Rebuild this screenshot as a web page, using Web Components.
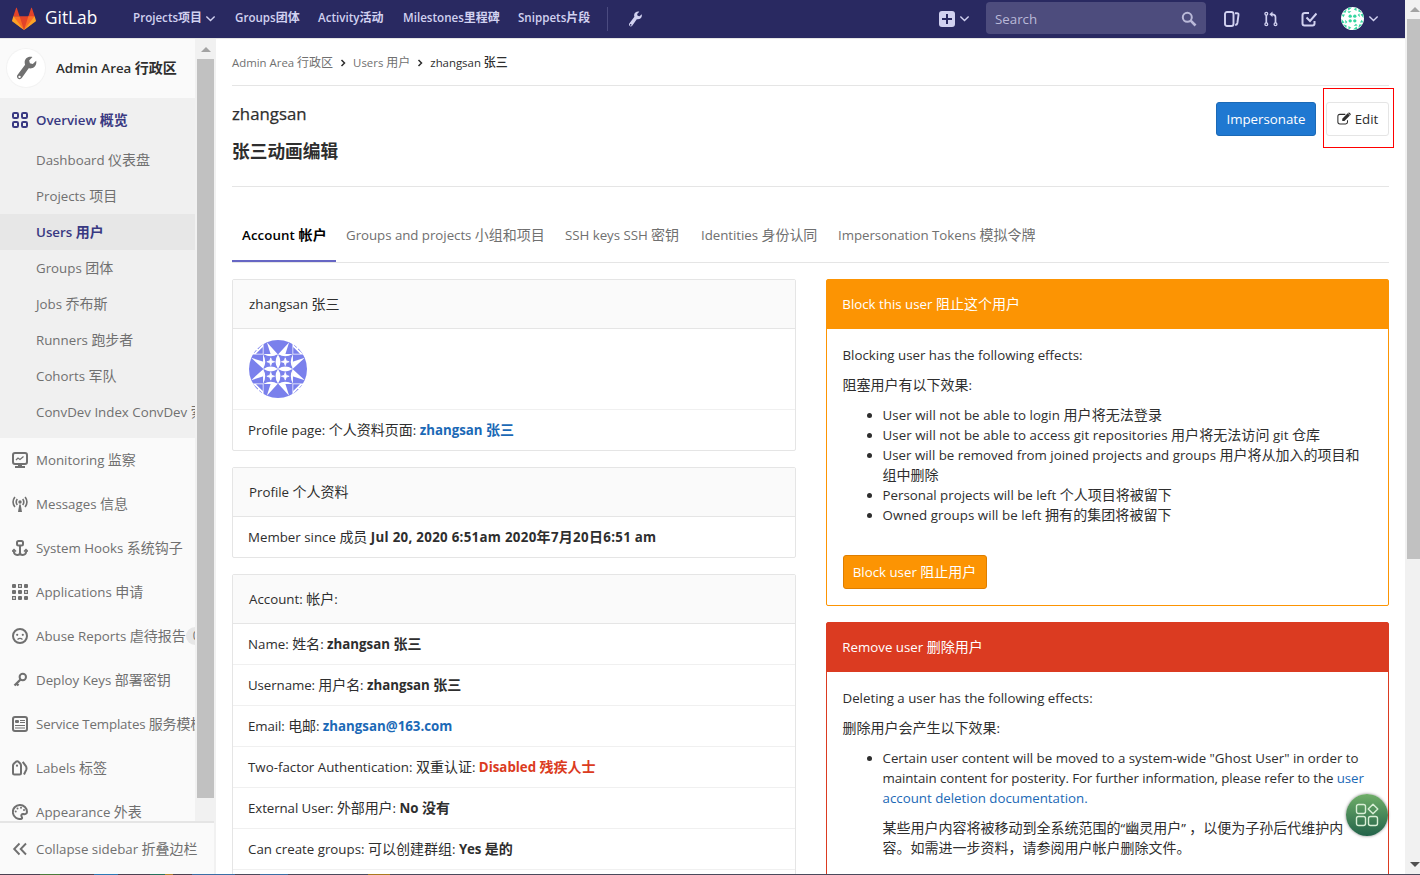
<!DOCTYPE html>
<html lang="zh">
<head>
<meta charset="utf-8">
<title>zhangsan · Users · GitLab</title>
<style>
    html, body {
        margin: 0;
        height: 100%;
        overflow: hidden;
    }
    body {
        font: 13.3px/20px "Open Sans", "Noto Sans CJK SC", sans-serif;
        color: #2e2e2e;
        background: #fff;
    }
</style>
</head>
<body>
<admin-page></admin-page>

<script>
// Latin runs inherit the text size, Chinese runs are set on a slightly bigger body
const wrapHan = html => html.replace(/>([^<]+)</g, (match, text) =>
    '>' + text.replace(/[\u4e00-\u9fff\uff0c\u3002]+/g, run => `<span class="zh">${run}</span>`) + '<');

class GlElement extends HTMLElement {
    constructor() {
        super();
        this.attachShadow({ mode: 'open' });
    }

    connectedCallback() {
        this.shadowRoot.innerHTML = `
            <style>
                * { box-sizing: border-box; }
                :host { display: block; box-sizing: border-box; }
                .zh { font-size: 1.053em; line-height: 1; }
                a { color: #1b69b6; text-decoration: none; }
                p, ul { margin: 0; padding: 0; }
            </style>
            ${wrapHan(this.render())}
        `;
    }
}

const ICONS = {
    overview: '<g fill="none" stroke="currentColor" stroke-width="2"><rect x="1" y="1" width="5" height="5" rx="1.2"/><rect x="10" y="1" width="5" height="5" rx="1.2"/><rect x="1" y="10" width="5" height="5" rx="1.2"/><rect x="10" y="10" width="5" height="5" rx="1.2"/></g>',
    monitor: '<g fill="none" stroke="currentColor"><rect x="1" y="1" width="14" height="11" rx="2" stroke-width="2"/><path d="M4 8l2-2 2 1.5L11.500 4.500" stroke-width="1.300"/><path d="M3 15h10" stroke-width="2"/><path d="M8 12v3" stroke-width="4"/></g>',
    messages: '<g fill="none" stroke="currentColor" stroke-width="1.600"><path d="M2.900 1Q-.8 6 2.900 11M13.100 1q3.700 5 0 10M5.300 3q-2.200 3 0 6M10.700 3q2.200 3 0 6"/></g><circle cx="8" cy="6" r="1.700" fill="currentColor"/><path d="M7.300 8.500h1.400L10 16H6z" fill="currentColor"/>',
    hook: '<g fill="none" stroke="currentColor" stroke-width="2"><rect x="5" y="1" width="6" height="4.500" rx="1.500"/><path d="M8 6v9M1.800 10.500v1q.4 3.500 3.400 3.500 2.800 0 2.800-2.500 0 2.500 2.800 2.500 3 0 3.400-3.500v-1"/><path d="M0 11.500l2-2 2 2M12 11.500l2-2 2 2" stroke-width="1.500"/></g>',
    applications: '<g fill="currentColor"><rect width="4" height="4" rx="1"/><rect x="12" width="4" height="4" rx="1"/><rect y="6" width="4" height="4" rx="1"/><rect x="6" y="6" width="4" height="4" rx="1"/><rect x="6" y="12" width="4" height="4" rx="1"/><rect x="12" y="12" width="4" height="4" rx="1"/></g><g fill="none" stroke="currentColor" stroke-width="1.200"><rect x="6.600" y=".6" width="2.800" height="2.800"/><rect x="12.600" y="6.600" width="2.800" height="2.800"/><rect x=".6" y="12.600" width="2.800" height="2.800"/></g>',
    abuse: '<circle cx="8" cy="8" r="7" fill="none" stroke="currentColor" stroke-width="2"/><circle cx="5.200" cy="6.800" r="1.100" fill="currentColor"/><circle cx="10.800" cy="6.800" r="1.100" fill="currentColor"/><path d="M5.500 11.500q2.500-2.300 5 0" fill="none" stroke="currentColor" stroke-width="1.300"/>',
    key: '<g fill="none" stroke="currentColor" stroke-width="2"><circle cx="10.800" cy="5" r="3.200"/><path d="M8.500 7.500L2.500 13.500M4 11l2.500 2.500" stroke-width="2.300"/></g>',
    template: '<rect x="1" y="1" width="14" height="14" rx="2" fill="none" stroke="currentColor" stroke-width="2"/><rect x="3" y="4" width="4" height="3" rx="1" fill="currentColor"/><path d="M8 4.500h5M8 6.500h5M3 9.500h10M3 12h10" stroke="currentColor"/>',
    labels: '<g fill="none" stroke="currentColor" stroke-width="2"><path d="M1 5.500Q1 4.500 2 3.500l2-1.800q1.200-.8 2.400 0L8.200 3.500q.8.900.8 2V13q0 1.500-1.500 1.500h-5Q1 14.500 1 13zM10.700 1.800l3 4q1.300 2 .5 4L12 14.500"/></g><circle cx="5" cy="5.700" r="1.100" fill="currentColor"/>',
    appearance: '<path d="M8 1a7 7 0 1 0 1.500 13.800c.9-.4.7-1.300.2-2-.9-1.600 0-3 1.600-2.800 1.400.4 3.700.1 3.700-2A7 7 0 0 0 8 1z" fill="none" stroke="currentColor" stroke-width="2"/><g fill="currentColor"><circle cx="3.700" cy="7.500" r="1"/><circle cx="5.500" cy="4.600" r="1"/><circle cx="9" cy="3.800" r="1"/><circle cx="12" cy="6" r="1"/></g>',
    collapse: '<path d="M7.500 2.500L2.200 8l5.300 5.500M14 2.500L8.700 8l5.300 5.500" fill="none" stroke="currentColor" stroke-width="1.900"/>',
    wrench: '<path d="M14.800 3.200l-2.300 2.100-1.900-.5-.5-1.800L12.300.7C10 .1 7.300 1.300 7.100 4c0 .8.100 1.300.3 1.800L2.300 12.600c-1.300 1.900 1.500 4 2.900 2.100l4.600-6.500c3.200.6 5.600-1.800 5-5zM3.700 14.700a.8.800 0 1 1 0-1.600.8.800 0 0 1 0 1.600z" fill="currentColor"/>',
    chevron: '<path d="M2 5l6 6 6-6" fill="none" stroke="currentColor" stroke-width="2"/>',
    crumb: '<path d="M5 2l6 6-6 6" fill="none" stroke="currentColor" stroke-width="3"/>',
    plus: '<rect width="16" height="16" rx="3" fill="currentColor"/><path d="M8 3v10M3 8h10" stroke="#292961" stroke-width="2"/>',
    search: '<circle cx="6.300" cy="6.300" r="4.500" fill="none" stroke="currentColor" stroke-width="2"/><path d="M9.700 9.700l4.800 4.800" stroke="currentColor" stroke-width="2.600"/>',
    issues: '<g fill="none" stroke="currentColor" stroke-width="1.900"><rect x="1" y="1" width="8.500" height="14" rx="2"/><path d="M11 2.200h2q1.700 0 1.500 1.700L13.400 12q-.3 1.800-2.200 2"/></g>',
    merge: '<g fill="none" stroke="currentColor" stroke-width="1.300"><circle cx="3.300" cy="2.700" r="1.400"/><circle cx="3.300" cy="13.300" r="1.400"/><circle cx="12.500" cy="13.300" r="1.400"/></g><path d="M3.300 4v8M12.500 12V6q0-2.700-3.500-2.700" fill="none" stroke="currentColor" stroke-width="1.700"/><path d="M9.500.5v5.600L6.300 3.300z" fill="currentColor"/>',
    todo: '<g fill="none" stroke="currentColor" stroke-width="2"><path d="M8 2H4Q1.500 2 1.500 4v8.500q0 2 2 2h8q2 0 2-2V10"/><path d="M5.500 6.500L9 10l6.500-7.500"/></g>',
    edit: '<g fill="none" stroke="currentColor" stroke-width="1.200"><path d="M9.500 2.700H3.300Q1 2.700 1 5v6.500q0 2.200 2.300 2.200h6.500q2.200 0 2.200-2.200V9.500"/></g><path d="M12.200 1.500l2.500 2.500-6.200 6.200H6V7.700zM13 .8q.7-.6 1.400 0l1.100 1.100q.6.700 0 1.300l-.4.400L12.600 1.200z" fill="currentColor"/>'
};

customElements.define('gl-icon', class extends GlElement {
    render() {
        const size = this.getAttribute('size') || 16;
        return `
            <style>
                :host { flex: none; width: ${size}px; height: ${size}px; }
                svg { display: block; }
            </style>
            <svg width="${size}" height="${size}" viewBox="0 0 16 16">${ICONS[this.getAttribute('name')]}</svg>
        `;
    }
});

customElements.define('gl-identicon', class extends GlElement {
    // a quarter of the picture, turned around the centre of a 4x4 grid
    quarter() {
        if (this.hasAttribute('green')) {
            return `
                <path d="M3 9l7-5-2 6zM11 1l8 0-6 5zM11 8l7-1-4 4zM1 13l6 0-3 5z" fill="#35d6a0"/>
                <circle cx="16" cy="16" r="2.900" fill="#35d6a0"/>
            `;
        }
        return `
            <path d="M10 0h10v10H10zM0 10h10v10H0z" fill="#7a80ec"/>
            <path d="M12.300 1.500L20 10h-5zM1.500 12.300L10 20v-5z" fill="#fff"/>
            <path d="M9.500 9.500V4.800L4.800 9.500zM1 9l3-3 1.300 1.300L3.600 9zM5 5l3-3h1.500v1L6.300 6.300z" fill="#7a80ec"/>
            <path d="M10 10h10v10H10z" fill="#7a80ec"/>
            <path d="M10 9.700q5 3 10 0M9.700 10q3 5 0 10M10 20q5-3.400 10 0zM20 10q-3.400 5 0 10z" fill="#fff"/>
            <path d="M15 12.300l.7 2 2 .7-2 .7-.7 2-.7-2-2-.7 2-.7z" fill="#fff" stroke="#fff" stroke-width=".5"/>
        `;
    }

    render() {
        const size = this.getAttribute('size');
        return `
            <style>
                :host { flex: none; width: ${size}px; height: ${size}px; border-radius: 50%; overflow: hidden; background: #fff; }
                svg { display: block; }
            </style>
            <svg width="${size}" height="${size}" viewBox="0 0 40 40">
                ${[0, 90, 180, 270].map(turn => `<g transform="rotate(${turn} 20 20)">${this.quarter()}</g>`).join('')}
            </svg>
        `;
    }
});

customElements.define('gl-scrollbar', class extends GlElement {
    render() {
        return `
            <style>
                :host {
                    display: flex;
                    flex-direction: column;
                    align-items: center;
                    background: #f1f1f1;
                }
                .up, .down {
                    flex: none;
                    border: 5px solid transparent;
                }
                .up { border-top: 0; border-bottom-color: #a3a3a3; margin: var(--up-margin, 8px 0 7px); }
                .down { border-bottom: 0; border-top-color: #505050; margin: auto 0 7px; }
                .thumb {
                    flex: none;
                    width: var(--thumb-width);
                    height: var(--thumb-height);
                    background: #c1c1c1;
                }
            </style>
            <div class="up"></div>
            <div class="thumb"></div>
            ${this.hasAttribute('down') ? '<div class="down"></div>' : ''}
        `;
    }
});

customElements.define('gl-navbar', class extends GlElement {
    render() {
        return `
            <style>
                :host {
                    display: flex;
                    align-items: center;
                    height: 38px;
                    padding: 0 0 1px 12px;
                    background: #292961;
                    color: #d1d1f0;
                    font-size: 11.6px;
                    font-weight: 600;
                }
                .zh { font-size: 12px; }
                .brand { display: flex; align-items: center; gap: 9px; width: 121px; color: #fff; font-size: 17.3px; font-weight: 400; }
                .brand span { margin-top: -1px; }
                .item { display: flex; align-items: center; gap: 3px; margin-top: -1px; white-space: nowrap; }
                .line { width: 1px; height: 24px; margin-right: 20px; background: #4b4b80; }
                .search {
                    display: flex;
                    align-items: center;
                    justify-content: space-between;
                    width: 220px;
                    height: 32px;
                    margin: 0 18px 1px 16px;
                    padding: 1px 9px 0 9px;
                    border-radius: 4px;
                    background: #4d4c7d;
                    color: #bab9d8;
                    font-size: 13.300px;
                    font-weight: 400;
                }
                .grow { flex: 1; }
            </style>
            <div class="brand">
                <svg width="24" height="24" viewBox="0 0 36 36">
                    <path fill="#e24329" d="M2 14l9.380 9v-9l-4-12.280c-.205-.632-1.176-.632-1.380 0zM34 14l-9.380 9v-9l4-12.280c.205-.632 1.176-.632 1.380 0zM18 34.380L3 14h30z"/>
                    <path fill="#fc6d26" d="M18 34.380L11.380 14H2l4 11zM18 34.380L24.620 14H34l-4 11z"/>
                    <path fill="#fca326" d="M2 14L.1 20.160c-.18.565 0 1.200.5 1.560L18 34.380zM34 14l1.900 6.160c.18.565 0 1.200-.5 1.560L18 34.380z"/>
                </svg>
                <span>GitLab</span>
            </div>
            <div class="item" style="width: 102px"><span>Projects项目</span><gl-icon name="chevron" size="11"></gl-icon></div>
            <div class="item" style="width: 83px"><span>Groups团体</span></div>
            <div class="item" style="width: 85px"><span>Activity活动</span></div>
            <div class="item" style="width: 115px"><span>Milestones里程碑</span></div>
            <div class="item" style="width: 89px"><span>Snippets片段</span></div>
            <div class="line"></div>
            <gl-icon name="wrench" style="margin-left: -1px"></gl-icon>
            <div class="grow"></div>
            <gl-icon name="plus"></gl-icon>
            <gl-icon name="chevron" size="11" style="margin-left: 4px"></gl-icon>
            <div class="search"><span>Search</span><gl-icon name="search"></gl-icon></div>
            <gl-icon name="issues" style="margin-right: 23px"></gl-icon>
            <gl-icon name="merge" style="margin-right: 22px"></gl-icon>
            <gl-icon name="todo" style="margin-right: 24px"></gl-icon>
            <gl-identicon green size="23"></gl-identicon>
            <gl-icon name="chevron" size="11" style="margin: 0 26px 0 4px"></gl-icon>
        `;
    }
});

customElements.define('admin-sidebar', class extends GlElement {
    constructor() {
        super();
        this.overview = ['Dashboard 仪表盘', 'Projects 项目', 'Users 用户', 'Groups 团体', 'Jobs 乔布斯', 'Runners 跑步者', 'Cohorts 军队', 'ConvDev Index ConvDev 索引'];
        this.sections = [
            ['monitor', 'Monitoring 监察'],
            ['messages', 'Messages 信息'],
            ['hook', 'System Hooks 系统钩子'],
            ['applications', 'Applications 申请'],
            ['abuse', 'Abuse Reports 虐待报告', '0'],
            ['key', 'Deploy Keys 部署密钥'],
            ['template', 'Service Templates 服务模板'],
            ['labels', 'Labels 标签'],
            ['appearance', 'Appearance 外表'],
        ];
    }

    render() {
        return `
            <style>
                :host {
                    display: flex;
                    flex-direction: column;
                    width: 216px;
                    height: 835px;
                    background: #f1f1f1;
                    color: #707070;
                    white-space: nowrap;
                }
                .body { display: flex; height: 782px; }
                nav { width: 195px; height: 782px; overflow: hidden; background: #fafafa; }
                gl-scrollbar { width: 21px; --thumb-width: 17px; --thumb-height: 739px; }
                .context { display: flex; align-items: center; gap: 11px; height: 59px; padding: 0 0 1px 7px; color: #2e2e2e; font-weight: 600; }
                .avatar { display: flex; align-items: center; justify-content: center; width: 38px; height: 38px; border-radius: 50%; background: #fff; box-shadow: 0 0 0 1px #f3f3f3; color: #707070; }
                .open { height: 340px; background: #f0f0f0; }
                .section { display: flex; align-items: center; gap: 8px; height: 44px; padding-left: 12px; }
                .open .section { color: #393982; font-weight: 600; }
                .sub { height: 36px; padding: 8px 0 0 36px; }
                .sub.active { background: #e7e7e7; color: #393982; font-weight: 600; }
                .template { letter-spacing: -.15px; }
                .badge { margin-left: -8px; padding: 0 7px; border-radius: 9px; background: #e7e7e7; font-size: 12px; line-height: 18px; }
                footer { display: flex; align-items: center; gap: 8px; width: 214px; height: 53px; padding-left: 12px; border-top: 2px solid #e5e5e5; background: #fafafa; }
            </style>
            <div class="body">
                <nav>
                    <div class="context"><div class="avatar"><gl-icon name="wrench" size="24"></gl-icon></div><span>Admin Area 行政区</span></div>
                    <div class="open">
                        <div class="section"><gl-icon name="overview"></gl-icon><span>Overview 概览</span></div>
                        ${this.overview.map(label => `<div class="sub${label.startsWith('Users') ? ' active' : ''}">${label}</div>`).join('')}
                    </div>
                    ${this.sections.map(([icon, label, count]) => `
                        <div class="section ${icon}">
                            <gl-icon name="${icon}"></gl-icon><span>${label}</span>${count ? `<span class="badge">${count}</span>` : ''}
                        </div>
                    `).join('')}
                </nav>
                <gl-scrollbar></gl-scrollbar>
            </div>
            <footer><gl-icon name="collapse"></gl-icon><span>Collapse sidebar 折叠边栏</span></footer>
        `;
    }
});

customElements.define('gl-panel', class extends GlElement {
    render() {
        return `
            <style>
                :host {
                    border: 1px solid var(--panel-border, #e5e5e5);
                    border-radius: 2px;
                }
                header {
                    height: 49px;
                    padding: 14px var(--title-inset, 16px);
                    border-bottom: 1px solid var(--panel-border, #e5e5e5);
                    background: var(--panel-header, #fafafa);
                    color: var(--panel-title, #2e2e2e);
                }
            </style>
            <header><slot name="title"></slot></header>
            <slot></slot>
        `;
    }
});

customElements.define('gl-row', class extends GlElement {
    render() {
        return `
            <style>
                :host { height: 41px; padding: 10px 15px; border-bottom: 1px solid #f0f0f0; white-space: nowrap; }
                :host(:last-child) { height: 40px; border-bottom: 0; }
                :host([tall]) { height: 81px; padding: 11px 16px; }
            </style>
            <slot></slot>
        `;
    }
});

customElements.define('gl-button', class extends GlElement {
    render() {
        return `
            <style>
                :host {
                    display: inline-flex;
                    align-items: center;
                    justify-content: center;
                    gap: 4px;
                    height: 34px;
                    border: 1px solid #e5e5e5;
                    border-radius: 3px;
                    white-space: nowrap;
                }
                :host([kind=primary]) { border-color: #1b69b6; background: #1f78d1; color: #fff; }
                :host([kind=warning]) { border-color: #de7e00; background: #fc9403; color: #fff; }
            </style>
            <slot></slot>
        `;
    }
});

customElements.define('user-details', class extends GlElement {
    render() {
        return `
            <style>
                :host { display: grid; grid-template-columns: 564px 563px; gap: 30px; align-items: start; }
                .column { display: grid; gap: 16px; }
                b { font-weight: 700; }
                .date { letter-spacing: .3px; }
                .red { color: #db3b21; }
                .block, .remove { --title-inset: 15.300px; }
                .block { --panel-border: #fc9403; --panel-header: #fc9403; --panel-title: #fff; }
                .remove { --panel-border: #db3b21; --panel-header: #db3b21; --panel-title: #fff; }
                .text { padding: 16px 15.5px; white-space: nowrap; }
                .text p { margin-bottom: 10px; }
                ul { padding-left: 40px; }
                .block ul { margin-bottom: 30px; }
                .block gl-button { display: flex; width: 144px; }
                .remove .text { height: 260px; }
                .tight { letter-spacing: -.09px; }
                .loose { letter-spacing: .06px; }
            </style>
            <div class="column">
                <gl-panel>
                    <span slot="title">zhangsan 张三</span>
                    <gl-row tall><gl-identicon size="58"></gl-identicon></gl-row>
                    <gl-row>Profile page: 个人资料页面: <a><b>zhangsan 张三</b></a></gl-row>
                </gl-panel>
                <gl-panel>
                    <span slot="title">Profile 个人资料</span>
                    <gl-row>Member since 成员 <b class="date">Jul 20, 2020 6:51am 2020年7月20日6:51 am</b></gl-row>
                </gl-panel>
                <gl-panel>
                    <span slot="title">Account: 帐户:</span>
                    <gl-row>Name: 姓名: <b>zhangsan 张三</b></gl-row>
                    <gl-row><span class="tight">Username: 用户名:</span> <b>zhangsan 张三</b></gl-row>
                    <gl-row><span class="tight">Email: 电邮:</span> <a><b>zhangsan@163.com</b></a></gl-row>
                    <gl-row>Two-factor Authentication: 双重认证: <b class="red">Disabled 残疾人士</b></gl-row>
                    <gl-row><span class="tight">External User: 外部用户:</span> <b>No 没有</b></gl-row>
                    <gl-row>Can create groups: 可以创建群组: <b class="tight">Yes 是的</b></gl-row>
                    <gl-row></gl-row>
                </gl-panel>
            </div>
            <div class="column">
                <gl-panel class="block">
                    <span slot="title">Block this user 阻止这个用户</span>
                    <div class="text">
                        <p>Blocking user has the following effects:</p>
                        <p>阻塞用户有以下效果:</p>
                        <ul>
                            <li class="loose">User will not be able to login 用户将无法登录</li>
                            <li class="loose">User will not be able to access git repositories 用户将无法访问 git 仓库</li>
                            <li>User will be removed from joined projects and groups 用户将从加入的项目和<br>组中删除</li>
                            <li>Personal projects will be left 个人项目将被留下</li>
                            <li class="loose">Owned groups will be left 拥有的集团将被留下</li>
                        </ul>
                        <gl-button kind="warning"><span>Block user 阻止用户</span></gl-button>
                    </div>
                </gl-panel>
                <gl-panel class="remove">
                    <span slot="title">Remove user 删除用户</span>
                    <div class="text">
                        <p>Deleting a user has the following effects:</p>
                        <p>删除用户会产生以下效果:</p>
                        <ul>
                            <li>
                                <p>Certain user content will be moved to a system-wide "Ghost User" in order to<br><span class="tight">maintain content for posterity. For further information, please refer to the <a>user</a></span><br><a>account deletion documentation.</a></p>
                                <p>某些用户内容将被移动到全系统范围的“幽灵用户” ，以便为子孙后代维护内<br>容。如需进一步资料，请参阅用户帐户删除文件。</p>
                            </li>
                        </ul>
                    </div>
                </gl-panel>
            </div>
        `;
    }
});

customElements.define('user-header', class extends GlElement {
    render() {
        return `
            <style>
                .crumbs { display: flex; align-items: center; gap: 6px; height: 47px; padding-top: 1px; border-bottom: 1px solid #e5e5e5; color: #707070; font-size: 11.4px; }
                .crumbs gl-icon { color: #2e2e2e; }
                .crumbs .here { color: #2e2e2e; font-weight: 500; }
                .title { display: flex; justify-content: space-between; height: 101px; padding-top: 16px; border-bottom: 1px solid #e5e5e5; }
                h3 { margin: 0; font-size: 16.800px; font-weight: 400; line-height: 24px; -webkit-text-stroke: .25px; }
                h3 + h3 { margin-top: 14px; font-weight: 700; -webkit-text-stroke: 0; }
                .actions { display: flex; gap: 10px; }
                .marked { position: relative; }
                .marked::after { content: ""; position: absolute; inset: -14px -5px 14px -3px; height: 60px; border: 1px solid #f00; box-sizing: border-box; }
                .tabs { display: flex; height: 76px; padding-top: 21px; border-bottom: 1px solid #e5e5e5; color: #707070; white-space: nowrap; }
                .tab { height: 54px; padding: 17px 0 0 10px; letter-spacing: -.04px; }
                .tab.active { border-bottom: 2px solid #6666c4; color: #000; font-weight: 600; letter-spacing: .1px; }
            </style>
            <div class="crumbs">
                <span>Admin Area 行政区</span><gl-icon name="crumb" size="8"></gl-icon>
                <span>Users 用户</span><gl-icon name="crumb" size="8"></gl-icon>
                <span class="here">zhangsan 张三</span>
            </div>
            <div class="title">
                <div><h3>zhangsan</h3><h3>张三动画编辑</h3></div>
                <div class="actions">
                    <gl-button kind="primary" style="width: 100px"><span>Impersonate</span></gl-button>
                    <div class="marked"><gl-button style="width: 63px"><gl-icon name="edit" size="14"></gl-icon><span>Edit</span></gl-button></div>
                </div>
            </div>
            <div class="tabs">
                <div class="tab active" style="width: 104px">Account 帐户</div>
                <div class="tab" style="width: 219px">Groups and projects 小组和项目</div>
                <div class="tab" style="width: 136px">SSH keys SSH 密钥</div>
                <div class="tab" style="width: 137px">Identities 身份认同</div>
                <div class="tab">Impersonation Tokens 模拟令牌</div>
            </div>
        `;
    }
});

customElements.define('admin-page', class extends GlElement {
    render() {
        return `
            <style>
                :host { display: grid; grid-template: 874px 1px / 1405px 15px; height: 875px; overflow: hidden; }
                .page { overflow: hidden; }
                .columns { display: flex; border-top: 1px solid #e5e5e5; }
                main { width: 1157px; margin-left: 16px; }
                user-details { margin-top: 16px; }
                gl-scrollbar { align-items: flex-end; --thumb-width: 13px; --thumb-height: 540px; --up-margin: 7px 0 7px; }
                .taskbar { grid-column: 1 / -1; background: linear-gradient(90deg, #4b4252 0 40px, #4b7a3c 40px 60px, #4b4252 60px 94px, #2d78b4 94px 118px, #4b4252 118px 150px, #26705c 150px 165px, #b8862d 165px 173px, #4b4252 173px 192px, #3b6ea5 192px 235px, #4b4a5c 235px 260px, #3b6ea5 260px 288px, #4b4a5c 288px 368px, #a8791f 368px 390px, #4b4a5c 390px); }
                .apps {
                    position: absolute;
                    left: 1346px;
                    top: 794px;
                    width: 42px;
                    height: 42px;
                    border-radius: 50%;
                    background: linear-gradient(#6fae68, #23634a);
                    box-shadow: 0 0 3px rgba(0, 0, 0, .5);
                }
                .apps svg { display: block; margin: 9px; }
            </style>
            <div class="page">
                <gl-navbar></gl-navbar>
                <div class="columns">
                    <admin-sidebar></admin-sidebar>
                    <main>
                        <user-header></user-header>
                        <user-details></user-details>
                    </main>
                </div>
            </div>
            <gl-scrollbar down></gl-scrollbar>
            <div class="taskbar"></div>
            <div class="apps">
                <svg width="24" height="24" viewBox="0 0 24 24" fill="none" stroke="#d9efd6" stroke-width="1.400">
                    <rect x="1.500" y="1.500" width="9" height="9" rx="2"/>
                    <rect x="1.500" y="13.500" width="9" height="9" rx="2"/>
                    <rect x="13.500" y="13.500" width="9" height="9" rx="2"/>
                    <path d="M18 1.200l4.800 4.800-4.800 4.800L13.200 6z" stroke-linejoin="round"/>
                </svg>
            </div>
        `;
    }
});
</script>
</body>
</html>
